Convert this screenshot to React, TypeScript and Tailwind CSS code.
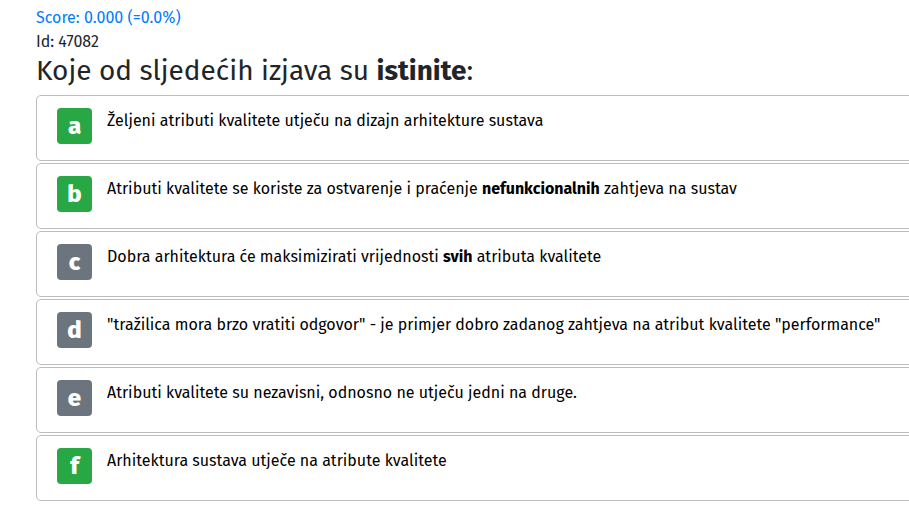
import type { ReactNode } from "react";

type Answer = { id: string; correct: boolean; text: ReactNode };

const answers: Answer[] = [
  { id: "a", correct: true, text: "Željeni atributi kvalitete utječu na dizajn arhitekture sustava" },
  {
    id: "b",
    correct: true,
    text: (
      <>
        Atributi kvalitete se koriste za ostvarenje i praćenje <strong>nefunkcionalnih</strong> zahtjeva na sustav
      </>
    ),
  },
  {
    id: "c",
    correct: false,
    text: (
      <>
        Dobra arhitektura će maksimizirati vrijednosti <strong>svih</strong> atributa kvalitete
      </>
    ),
  },
  {
    id: "d",
    correct: false,
    text: '"tražilica mora brzo vratiti odgovor" - je primjer dobro zadanog zahtjeva na atribut kvalitete "performance"',
  },
  { id: "e", correct: false, text: "Atributi kvalitete su nezavisni, odnosno ne utječu jedni na druge." },
  { id: "f", correct: true, text: "Arhitektura sustava utječe na atribute kvalitete" },
];

function AnswerRow({ answer }: { answer: Answer }) {
  return (
    <li className="flex min-h-[66px] items-start rounded-[5px] border border-[#bdbdbd] py-3 pr-5 pl-5">
      <span
        className={`flex h-9 w-[35px] shrink-0 items-center justify-center rounded text-2xl font-extrabold text-white ${
          answer.correct ? "bg-[#28a745]" : "bg-[#6c757d]"
        }`}
      >
        {answer.id}
      </span>
      <div className="ml-[15px] leading-[26px] text-black">{answer.text}</div>
    </li>
  );
}

export default function App() {
  return (
    <main className="overflow-x-hidden bg-white pt-[6px] pb-7 pl-9 font-['Fira_Sans','Noto_Sans',sans-serif] text-base leading-6 text-[#212529]">
      <p className="text-[#007bff]">Score: 0.000 (=0.0%)</p>
      <p>Id: 47082</p>
      <h1 className="mb-[7px] text-[28px] leading-[34px]">
        Koje od sljedećih izjava su <strong>istinite</strong>:
      </h1>
      <ol className="-mr-5 flex flex-col gap-[2px]">
        {answers.map((answer) => (
          <AnswerRow key={answer.id} answer={answer} />
        ))}
      </ol>
    </main>
  );
}
